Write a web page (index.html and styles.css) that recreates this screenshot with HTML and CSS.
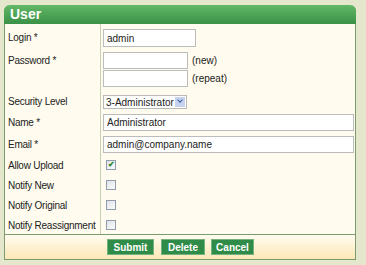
FILE: index.html
```html
<!DOCTYPE html>
<html lang="en">
<head>
    <meta charset="UTF-8">
    <title>User</title>
    <link rel="stylesheet" href="styles.css">
</head>
<body>
    <div class="panel">
        <div class="panel-head">User</div>
        <div class="form">
            <div class="row login">
                <div class="label">Login *</div>
                <div class="field"><input type="text" class="short" value="admin"></div>
            </div>
            <div class="row password">
                <div class="label">Password *</div>
                <div class="field">
                    <div class="pw"><input type="password" class="pass"><span>(new)</span></div>
                    <div class="pw"><input type="password" class="pass"><span>(repeat)</span></div>
                </div>
            </div>
            <div class="row level">
                <div class="label">Security Level</div>
                <div class="field">
                    <span class="select">3-Administrator<span class="arrow"></span></span>
                </div>
            </div>
            <div class="row text">
                <div class="label">Name *</div>
                <div class="field"><input type="text" class="wide" value="Administrator"></div>
            </div>
            <div class="row text">
                <div class="label">Email *</div>
                <div class="field"><input type="text" class="wide" value="admin@company.name"></div>
            </div>
            <div class="row check-row">
                <div class="label">Allow Upload</div>
                <div class="field"><span class="check">&#10004;</span></div>
            </div>
            <div class="row check-row">
                <div class="label">Notify New</div>
                <div class="field"><span class="check"></span></div>
            </div>
            <div class="row check-row">
                <div class="label">Notify Original</div>
                <div class="field"><span class="check"></span></div>
            </div>
            <div class="row check-row last">
                <div class="label">Notify Reassignment</div>
                <div class="field"><span class="check"></span></div>
            </div>
        </div>
        <div class="panel-foot">
            <button class="b-submit">Submit</button>
            <button class="b-delete">Delete</button>
            <button class="b-cancel">Cancel</button>
        </div>
    </div>
</body>
</html>
```

FILE: styles.css
```css
body {
    margin: 0;
    padding: 5px 0 0 4px;
    background: #e4e7cb;
    font-family: "Liberation Sans", Arial, sans-serif;
    font-size: 10px;
    color: #222;
}
.panel {
    width: 350px;
    border: 1px solid #7c9c70;
    border-top: none;
    border-radius: 6px 6px 0 0;
    background: #fffcef;
}
.panel-head {
    height: 19px;
    padding-left: 6px;
    margin: 0 -1px;
    background: linear-gradient(#62b866, #3a9147);
    border-radius: 6px 6px 0 0;
    color: #fff;
    font-weight: bold;
    font-size: 14px;
    line-height: 19px;
}

/* form rows */
.row {
    display: flex;
    height: var(--h);
}
.label {
    width: 96px;
    box-sizing: border-box;
    flex-shrink: 0;
    padding: var(--pt) 0 0 3px;
    line-height: var(--lh);
    letter-spacing: -0.25px;
    white-space: nowrap;
    border-right: 1px solid #c8d0b4;
}
.field {
    padding: var(--pt) 0 0 2px;
}
.login {
    --h: 25px;
    --pt: 5px;
    --lh: 18px;
}
.password {
    --h: 40px;
    --pt: 3px;
    --lh: 17px;
}
.level {
    --h: 22px;
    --pt: 6px;
    --lh: 14px;
}
.text {
    --h: 22px;
    --pt: 3px;
    --lh: 17px;
}
.check-row {
    --h: 20px;
    --pt: 2px;
    --lh: 18px;
}
.check-row.last {
    --h: 19px;
}
input {
    display: block;
    font-family: "Liberation Sans", Arial, sans-serif;
    font-size: 10px;
    height: 17px;
    padding: 0 3px;
    border: 1px solid #bcbcbc;
    background: #fff;
    box-sizing: border-box;
    margin: 0;
    color: #222;
}
.short {
    width: 93px;
    height: 18px;
}
.pass {
    width: 85px;
}
.wide {
    width: 251px;
}
.pw {
    display: flex;
    align-items: center;
    gap: 4px;
    height: 17px;
    margin-bottom: 1px;
}
.select {
    display: flex;
    align-items: center;
    white-space: nowrap;
    height: 14px;
    width: 84px;
    box-sizing: border-box;
    border: 1px solid #b9b9b9;
    background: #fff;
    padding-left: 2px;
}
.arrow {
    margin-left: auto;
    margin-right: 1px;
    width: 10px;
    height: 10px;
    background: #c4d2ee;
    position: relative;
}
.arrow::after {
    content: "";
    position: absolute;
    left: 3px;
    top: 1px;
    width: 3px;
    height: 3px;
    border-right: 1.5px solid #3d5c9c;
    border-bottom: 1.5px solid #3d5c9c;
    transform: rotate(45deg);
}
.check {
    display: block;
    width: 10px;
    height: 10px;
    box-sizing: border-box;
    border: 1px solid #8e9cab;
    background: linear-gradient(135deg, #dfe2e8, #fbfbfc);
    margin: 3px 0 0 3px;
    font-size: 8px;
    line-height: 8px;
    text-align: center;
    color: #2d8a2d;
    font-weight: bold;
}
.panel-foot {
    border-top: 1px solid #7c9c70;
    height: 24px;
    background: linear-gradient(#fffcef, #fde7b6);
    display: flex;
    gap: 7px;
    padding-left: 102px;
    align-items: center;
}
button {
    height: 16px;
    padding: 0;
    border: 1px solid #75b27f;
    background: #2f8c48;
    color: #fff;
    font-family: "Liberation Sans", Arial, sans-serif;
    font-size: 10px;
    font-weight: bold;
}
.b-submit {
    width: 47px;
}
.b-delete {
    width: 44px;
    margin-right: -1px;
}
.b-cancel {
    width: 43px;
}
```
